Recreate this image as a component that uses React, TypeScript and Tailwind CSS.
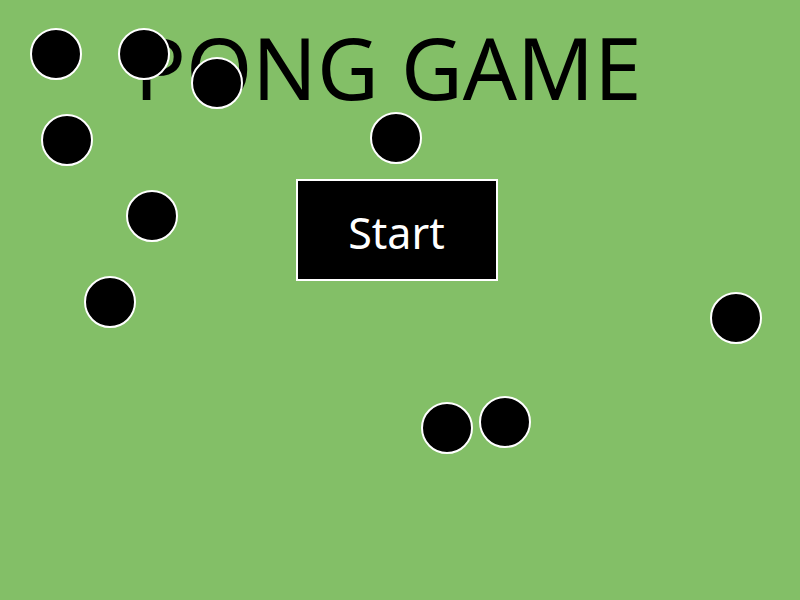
import React from "react";

type Ball = { x: number; y: number };

// ball centers, as they sit on the field
const balls: Ball[] = [
  { x: 56, y: 54 },
  { x: 144, y: 54 },
  { x: 217, y: 83 },
  { x: 67, y: 140 },
  { x: 396, y: 138 },
  { x: 152, y: 216 },
  { x: 110, y: 302 },
  { x: 736, y: 318 },
  { x: 447, y: 428 },
  { x: 505, y: 422 },
];

const App = () => {
  return (
    <div
      className="relative h-[600px] w-[800px] overflow-hidden bg-[#83bf67] text-black"
      style={{ fontFamily: '"Noto Sans", "Open Sans", sans-serif' }}
    >
      <div className="flex flex-col items-center">
        <h1 className="mt-[25px] ml-[-24px] text-[85px] leading-none font-normal">
          PONG GAME
        </h1>
        <button className="mt-[69px] ml-[-7px] flex h-[102px] w-[202px] items-center justify-center border-2 border-white bg-black pt-[6px] text-[43px] text-white">
          Start
        </button>
      </div>

      {balls.map((b, i) => (
        <div
          key={i}
          className="absolute h-[52px] w-[52px] rounded-full border-2 border-white bg-black"
          style={{ left: b.x - 26, top: b.y - 26 }}
        />
      ))}
    </div>
  );
};

export default App;
